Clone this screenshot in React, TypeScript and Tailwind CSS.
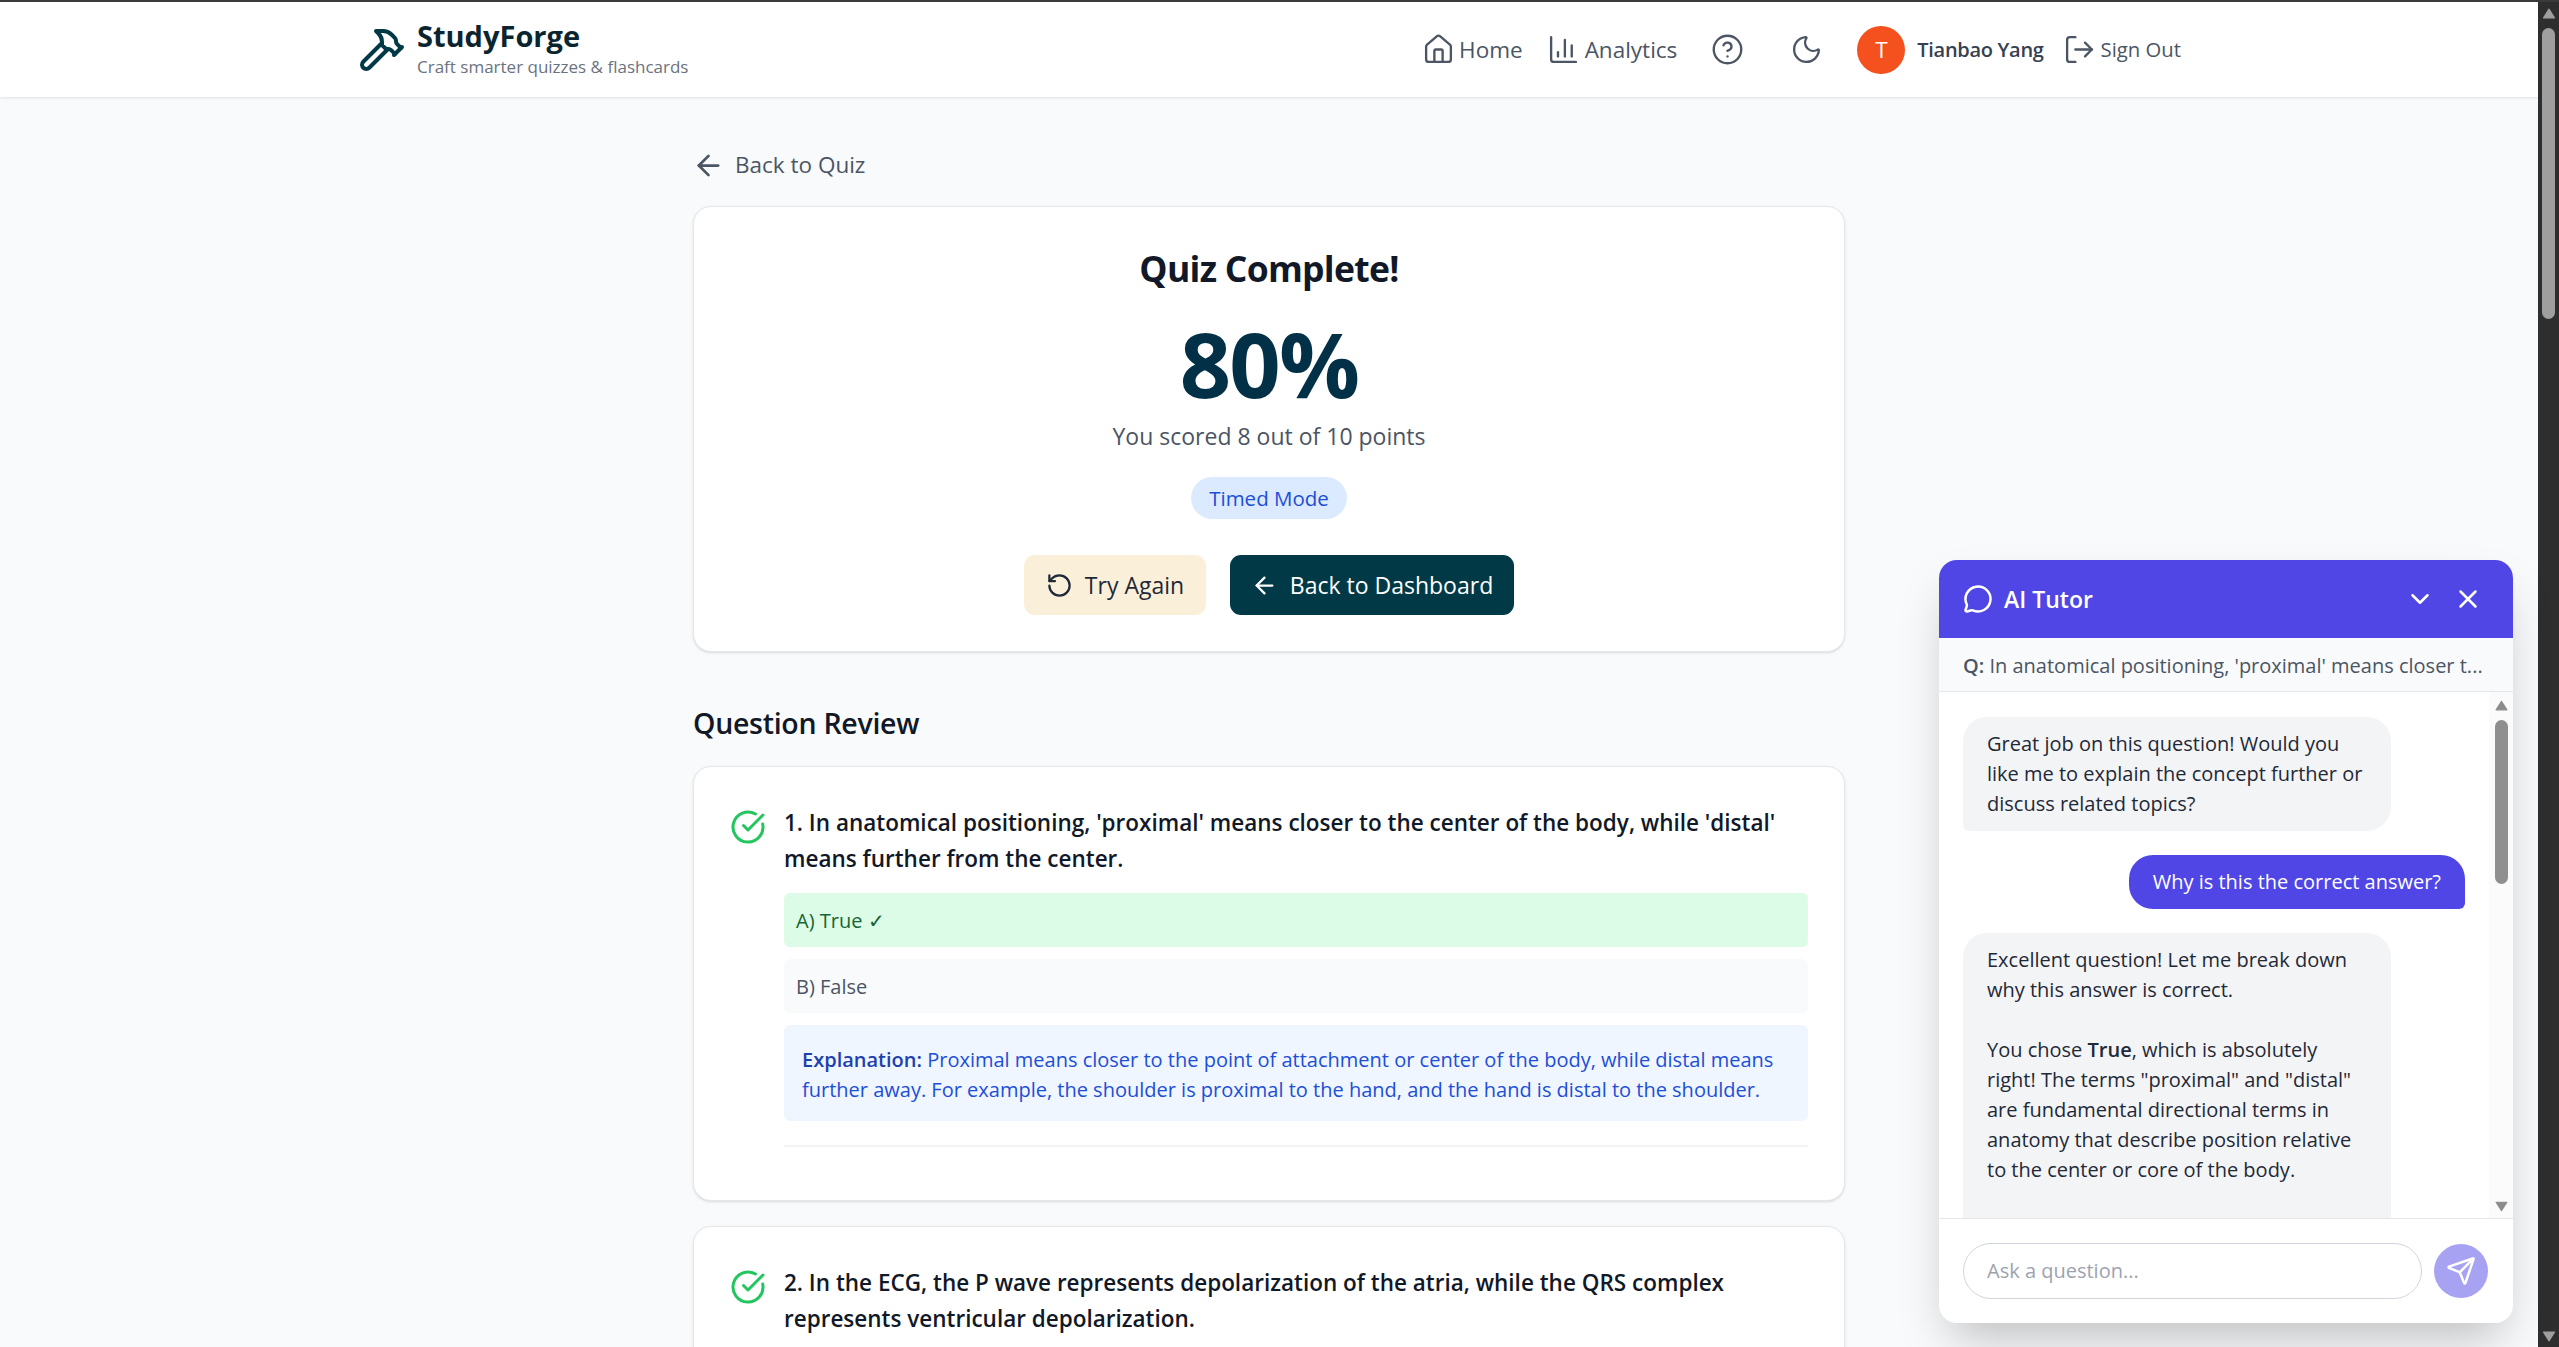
import {
  ArrowLeft,
  ChartColumn,
  ChevronDown,
  CircleCheckBig,
  CircleHelp,
  Hammer,
  House,
  LogOut,
  MessageCircle,
  Moon,
  RotateCcw,
  Send,
  X,
} from "lucide-react";

function Arrow({ down, className }: { down?: boolean; className: string }) {
  return (
    <svg viewBox="0 0 12 10" className={className} fill="currentColor">
      <path d={down ? "M1 1h10L6 9z" : "M6 1l5 8H1z"} stroke="currentColor" strokeLinejoin="round" />
    </svg>
  );
}

function NavBar() {
  return (
    <header className="h-[97px] shrink-0 bg-white shadow-[0_1px_3px_rgba(0,0,0,0.1)] relative">
      <div className="mx-auto w-[1824px] h-full flex items-center justify-between pl-[1px]">
        <div className="flex items-center gap-[11px]">
          <Hammer className="w-[48px] h-[48px] text-[#023947]" strokeWidth={2} />
          <div>
            <div className="text-[29px] leading-[36px] font-bold text-[#0b2530]">StudyForge</div>
            <div className="text-[17px] leading-[24px] text-[#6b7280] mt-[1px]">Craft smarter quizzes &amp; flashcards</div>
          </div>
        </div>
        <nav className="flex items-center text-[#4b5563] pt-[2px]">
          <a className="flex items-center gap-[4px] text-[22.5px]">
            <House className="w-[33px] h-[33px]" strokeWidth={1.7} />
            Home
          </a>
          <a className="flex items-center gap-[5px] text-[22.5px] ml-[24px]">
            <ChartColumn className="w-[33px] h-[33px]" strokeWidth={1.7} />
            Analytics
          </a>
          <CircleHelp className="w-[33px] h-[33px] ml-[34px]" strokeWidth={1.7} />
          <Moon className="w-[33px] h-[33px] ml-[46px]" strokeWidth={1.7} />
          <div className="w-[48px] h-[48px] rounded-full bg-[#f4511e] text-white flex items-center justify-center text-[22.5px] ml-[34px]">T</div>
          <span className="text-[20px] font-semibold tracking-[-0.015em] text-[#374151] ml-[12px]">Tianbao Yang</span>
          <a className="flex items-center gap-[5px] text-[20.3px] ml-[19px]">
            <LogOut className="w-[33px] h-[33px]" strokeWidth={1.7} />
            Sign Out
          </a>
        </nav>
      </div>
    </header>
  );
}

function ScoreCard() {
  return (
    <section className="bg-white border border-[#e5e7eb] rounded-[18px] shadow-sm p-[36px] flex flex-col items-center">
      <h1 className="text-[35.5px] leading-[48px] font-bold text-[#111827] tracking-[-0.02em] mt-[1px]">Quiz Complete!</h1>
      <div className="text-[90px] leading-[90px] font-bold text-[#023047] tracking-[-0.02em] mt-[26px]">80%</div>
      <p className="text-[23px] leading-[36px] text-[#4b5563] mt-[10px]">You scored 8 out of 10 points</p>
      <span className="h-[42px] mt-[23px] px-[18px] rounded-full bg-[#dbeafe] text-[#1d4ed8] text-[20.5px] font-medium flex items-center">Timed Mode</span>
      <div className="flex gap-[24px] mt-[36px]">
        <button className="h-[60px] w-[182px] rounded-[11px] bg-[#faf0da] text-[#1f2937] text-[23px] flex items-center justify-center gap-[12px]">
          <RotateCcw className="w-[27px] h-[27px]" />
          Try Again
        </button>
        <button className="h-[60px] w-[284px] rounded-[11px] bg-[#023947] text-white text-[23px] flex items-center justify-center gap-[12px]">
          <ArrowLeft className="w-[27px] h-[27px]" />
          Back to Dashboard
        </button>
      </div>
    </section>
  );
}

function ReviewCards() {
  return (
    <>
      <section className="bg-white border border-[#e5e7eb] rounded-[18px] shadow-sm p-[36px] pb-[53px]">
        <div className="flex gap-[18px]">
          <CircleCheckBig className="w-[36px] h-[36px] mt-[6px] shrink-0 text-[#22c55e]" />
          <div className="flex-1">
            <p className="pt-[2px] text-[22.5px] leading-[36px] font-semibold text-[#111827]">
              1. In anatomical positioning, 'proximal' means closer to the center of the body, while 'distal' means further from the center.
            </p>
            <div className="mt-[16px] flex flex-col gap-[12px]">
              <div className="h-[54px] rounded-[6px] bg-[#dcfce7] px-[12px] pt-[2px] flex items-center text-[20px] text-[#166534]">A) True ✓</div>
              <div className="h-[54px] rounded-[6px] bg-[#f9fafb] px-[12px] pt-[2px] flex items-center text-[20px] text-[#4b5563]">B) False</div>
              <div className="rounded-[6px] bg-[#eff6ff] px-[18px] pt-[20px] pb-[16px] text-[20px] leading-[30px] text-[#1d4ed8]">
                <strong className="font-semibold text-[#1e40af]">Explanation:</strong> Proximal means closer to the point of attachment or center of the body, while distal means further away. For example, the shoulder is proximal to the hand, and the hand is distal to the shoulder.
              </div>
            </div>
            <div className="mt-[24px] border-b-2 border-[#f3f4f6]" />
          </div>
        </div>
      </section>
      <section className="bg-white border border-[#e5e7eb] rounded-[18px] shadow-sm p-[36px] mt-[25px]">
        <div className="flex gap-[18px]">
          <CircleCheckBig className="w-[36px] h-[36px] mt-[6px] shrink-0 text-[#22c55e]" />
          <p className="flex-1 pt-[2px] text-[22.5px] leading-[36px] font-semibold text-[#111827]">
            2. In the ECG, the P wave represents depolarization of the atria, while the QRS complex represents ventricular depolarization.
          </p>
        </div>
      </section>
    </>
  );
}

function ChatPanel() {
  return (
    <aside className="absolute right-[46px] bottom-[24px] w-[574px] h-[763px] rounded-[18px] bg-white overflow-hidden flex flex-col shadow-[0_25px_50px_-12px_rgba(0,0,0,0.25)]">
      <div className="h-[78px] shrink-0 bg-[#4f46e5] text-white px-[24px] flex items-center">
        <MessageCircle className="w-[30px] h-[30px]" />
        <span className="ml-[11px] text-[23px] font-semibold">AI Tutor</span>
        <ChevronDown className="w-[30px] h-[30px] ml-auto" />
        <X className="w-[30px] h-[30px] ml-[18px] mr-[6px]" />
      </div>
      <div className="h-[54px] shrink-0 bg-[#f9fafb] border-b border-[#e5e7eb] pl-[24px] pt-[2px] flex items-center text-[20px] text-[#4b5563]">
        <span className="whitespace-nowrap"><strong className="font-semibold">Q:</strong> In anatomical positioning, 'proximal' means closer t...</span>
      </div>
      <div className="flex-1 min-h-0 flex overflow-hidden">
        <div className="flex-1 min-w-0 overflow-hidden pl-[24px] pr-[24px] pt-[25px] flex flex-col gap-[24px] text-[20px] leading-[30px]">
          <div className="w-[428px] shrink-0 rounded-[24px] rounded-bl-[6px] bg-[#f3f4f6] text-[#1f2937] px-[24px] py-[12px]">
            Great job on this question! Would you like me to explain the concept further or discuss related topics?
          </div>
          <div className="self-end shrink-0 rounded-[24px] rounded-br-[6px] bg-[#4f46e5] text-white px-[24px] py-[12px]">
            Why is this the correct answer?
          </div>
          <div className="w-[428px] shrink-0 rounded-[24px] rounded-bl-[6px] bg-[#f3f4f6] text-[#1f2937] px-[24px] pt-[12px] pb-[60px]">
            <p>Excellent question! Let me break down why this answer is correct.</p>
            <p className="mt-[30px]">You chose <strong className="font-semibold">True</strong>, which is absolutely right! The terms "proximal" and "distal" are fundamental directional terms in anatomy that describe position relative to the center or core of the body.</p>
          </div>
        </div>
        <div className="w-[24px] shrink-0 bg-[#fbfbfb] flex flex-col items-center text-[#8b8b8b] pt-[8px] pb-[6px]">
          <Arrow className="w-[13px] h-[11px]" />
          <div className="w-[13px] h-[164px] rounded-full bg-[#8f8f8f] mt-[9px]" />
          <Arrow down className="w-[13px] h-[11px] mt-auto" />
        </div>
      </div>
      <div className="h-[105px] shrink-0 border-t border-[#e5e7eb] px-[24px] flex items-center gap-[12px]">
        <div className="flex-1 h-[56px] rounded-full border border-[#d1d5db] px-[23px] flex items-center text-[20px] text-[#9ca3af]">Ask a question...</div>
        <button className="w-[54px] h-[54px] rounded-full bg-[#a7a3f2] text-white flex items-center justify-center mr-[1px]">
          <Send className="w-[30px] h-[30px]" />
        </button>
      </div>
    </aside>
  );
}

export default function App() {
  return (
    <div className="w-[2559px] h-[1347px] flex overflow-hidden relative bg-[#f9fafb] font-['Open_Sans',sans-serif]">
      <div className="absolute inset-x-0 top-0 h-[2px] bg-[#3a3a3a] z-10" />
      <div className="w-[2538px] shrink-0 flex flex-col">
        <NavBar />
        <main className="w-[1152px] mx-auto pt-[50px]">
          <a className="flex items-center gap-[10px] h-[36px] text-[22.5px] text-[#4b5563] -ml-[1px]">
            <ArrowLeft className="w-[33px] h-[33px]" />
            Back to Quiz
          </a>
          <div className="mt-[23px]">
            <ScoreCard />
          </div>
          <h2 className="mt-[50px] text-[28.5px] leading-[42px] font-semibold text-[#111827] tracking-[-0.01em]">Question Review</h2>
          <div className="mt-[22px]">
            <ReviewCards />
          </div>
        </main>
      </div>
      <div className="w-[21px] shrink-0 bg-[#2e2e2e] flex flex-col items-center text-[#9f9f9f] pt-[8px] pb-[5px]">
        <Arrow className="w-[14px] h-[11px]" />
        <div className="w-[13px] h-[291px] rounded-full bg-[#9f9f9f] mt-[9px]" />
        <Arrow down className="w-[14px] h-[11px] mt-auto" />
      </div>
      <ChatPanel />
    </div>
  );
}
